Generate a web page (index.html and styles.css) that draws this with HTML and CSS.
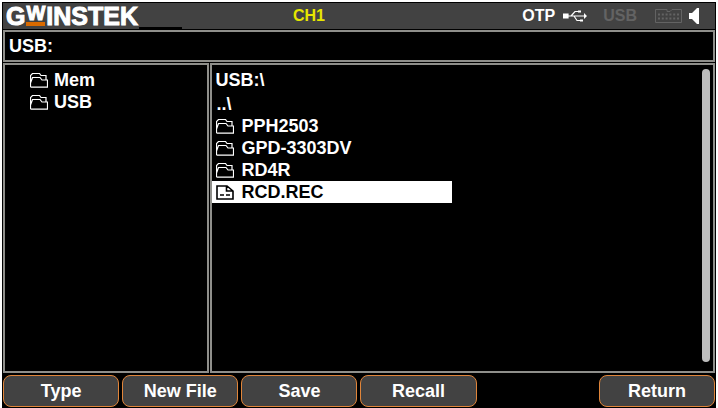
FILE: index.html
```html
<!DOCTYPE html>
<html lang="en">
<head>
    <meta charset="utf-8">
    <title>File Utility</title>
    <link rel="stylesheet" href="styles.css">
</head>
<body>
    <svg class="symbols" aria-hidden="true">
        <symbol id="folder" viewBox="0 0 18 15">
            <path d="M.5 14V2.5L2.5 .5H9.5L11 2.5H16V6.5M.5 10L2.5 4.5H10L12 7H17.5V14.2H.5" fill="none" stroke="currentColor" stroke-width="1.2"/>
        </symbol>
        <symbol id="file" viewBox="0 0 18 15">
            <path d="M1 1H11L17 6V14H1ZM10.5 1V6H17M4 10H8M10 10H14" fill="none" stroke="currentColor" stroke-width="1.6"/>
        </symbol>
    </svg>

    <div class="screen">
        <header class="status-bar">
            <div class="brand">
                <div class="logo">G<span class="logo-w">W</span>INSTEK</div>
                <span class="brand-line"></span>
            </div>
            <span class="channel">CH1</span>
            <div class="indicators">
                <span>OTP</span>
                <svg class="usb-icon" viewBox="0 0 24 14" fill="none" stroke="currentColor" stroke-width="1.2">
                    <path d="M0 5H5V9H0Z" fill="currentColor"/>
                    <path d="M5 7H22M8 7L12 2.5H16M11 7L14 11.5H18"/>
                    <path d="M21 4L24 7L21 10ZM15 1.5H18V3.5H15ZM17 10.5H20V12.5H17Z" fill="currentColor" stroke="none"/>
                </svg>
                <span class="off">USB</span>
                <svg class="off keyboard-icon" viewBox="0 0 27 14" fill="none" stroke="currentColor">
                    <path d="M12 .5H.5V13.5H26.5V.5H17L15 2.5H12V.5"/>
                    <path d="M3 5.5H24M3 9.5H24" stroke-width="2" stroke-dasharray="2 1.8"/>
                </svg>
                <svg class="speaker-icon" viewBox="0 0 10 16">
                    <path d="M0 5H3L8 0H10V16H8L3 11H0Z" fill="currentColor"/>
                </svg>
            </div>
        </header>

        <div class="path">USB:</div>

        <main class="browser">
            <ul class="pane drives">
                <li><svg class="icon"><use href="#folder"/></svg>Mem</li>
                <li><svg class="icon"><use href="#folder"/></svg>USB</li>
            </ul>
            <div class="pane files">
                <div class="listing">
                    <p class="current">USB:\</p>
                    <ul>
                        <li class="parent">..\</li>
                        <li><svg class="icon"><use href="#folder"/></svg>PPH2503</li>
                        <li><svg class="icon"><use href="#folder"/></svg>GPD-3303DV</li>
                        <li><svg class="icon"><use href="#folder"/></svg>RD4R</li>
                        <li class="selected"><svg class="icon"><use href="#file"/></svg>RCD.REC</li>
                    </ul>
                </div>
                <div class="scrollbar"></div>
            </div>
        </main>

        <nav class="softkeys">
            <button type="button">Type</button>
            <button type="button">New File</button>
            <button type="button">Save</button>
            <button type="button">Recall</button>
            <button type="button" class="return">Return</button>
        </nav>
    </div>
</body>
</html>
```

FILE: styles.css
```css
* {
    box-sizing: border-box;
}
body {
    margin: 0;
    background: white;
    color: white;
    font: bold 18px/22px "Liberation Sans", Arial, sans-serif;
}
ul, p {
    margin: 0;
    padding: 0;
    list-style: none;
}
.symbols {
    display: none;
}
.screen {
    display: flex;
    flex-direction: column;
    min-height: 100vh;
    padding: 1px 1px 0 1px;
    background: black;
    border: 2px solid white;
    border-bottom-width: 0;
}
.status-bar {
    display: grid;
    grid-template-columns: 1fr auto 1fr;
    height: 26px;
    margin-bottom: 1px;
    background: #424242;
    font-size: 16px;
    line-height: 26px;
}
.brand {
    display: flex;
    height: 26px;
    padding-left: 3px;
}
.logo {
    font-size: 25px;
    line-height: 27px;
    -webkit-text-stroke: 1px white;
}
.logo-w {
    display: inline-block;
    height: 23px;
    margin: 0 1px;
    font-size: 20px;
    line-height: 21px;
    vertical-align: top;
    border-bottom: 4px solid #d96a00;
}
.brand-line {
    align-self: flex-end;
    width: 43px;
    height: 2px;
    margin-left: 1px;
    background: black;
}
.channel {
    margin-right: 100px;
    color: #e6e600;
}
.indicators {
    display: flex;
    align-items: center;
    justify-content: flex-end;
    padding-right: 16px;
}
.off {
    color: #636363;
}
.usb-icon {
    width: 24px;
    height: 14px;
    margin: 0 16px 0 8px;
}
.keyboard-icon {
    width: 27px;
    height: 14px;
    margin: 0 7px 0 18px;
}
.speaker-icon {
    width: 10px;
    height: 16px;
}
.path {
    margin-bottom: 1px;
    padding: 0 4px;
    border: 2px solid #8f8f8b;
    line-height: 28px;
}
.browser {
    display: flex;
    flex: 1;
    gap: 1px;
}
.pane {
    border: 2px solid #8f8f8b;
    padding-top: 4px;
}
.drives {
    width: 29%;
    padding-left: 25px;
}
.files {
    display: flex;
    flex: 1;
    padding-right: 3px;
}
.listing {
    flex: 1;
}
.current {
    margin-bottom: 2px;
    padding-left: 3px;
}
li {
    display: flex;
    align-items: center;
    gap: 6px;
}
.files li {
    width: 49%;
    padding-left: 4px;
    gap: 7px;
}
.icon {
    width: 18px;
    height: 15px;
}
.files .selected {
    background: white;
    color: black;
}
.scrollbar {
    width: 8px;
    margin-bottom: 9px;
    border-radius: 4px;
    background: #bdbdbd;
}
.softkeys {
    display: grid;
    grid-template-columns: repeat(6, 1fr);
    gap: 3px;
    padding: 2px 0 1px;
}
button {
    height: 32px;
    padding: 0;
    border: 1px solid #e0853a;
    border-radius: 8px;
    background: #424242;
    color: white;
    font: inherit;
}
.return {
    grid-column: 6;
}
```
